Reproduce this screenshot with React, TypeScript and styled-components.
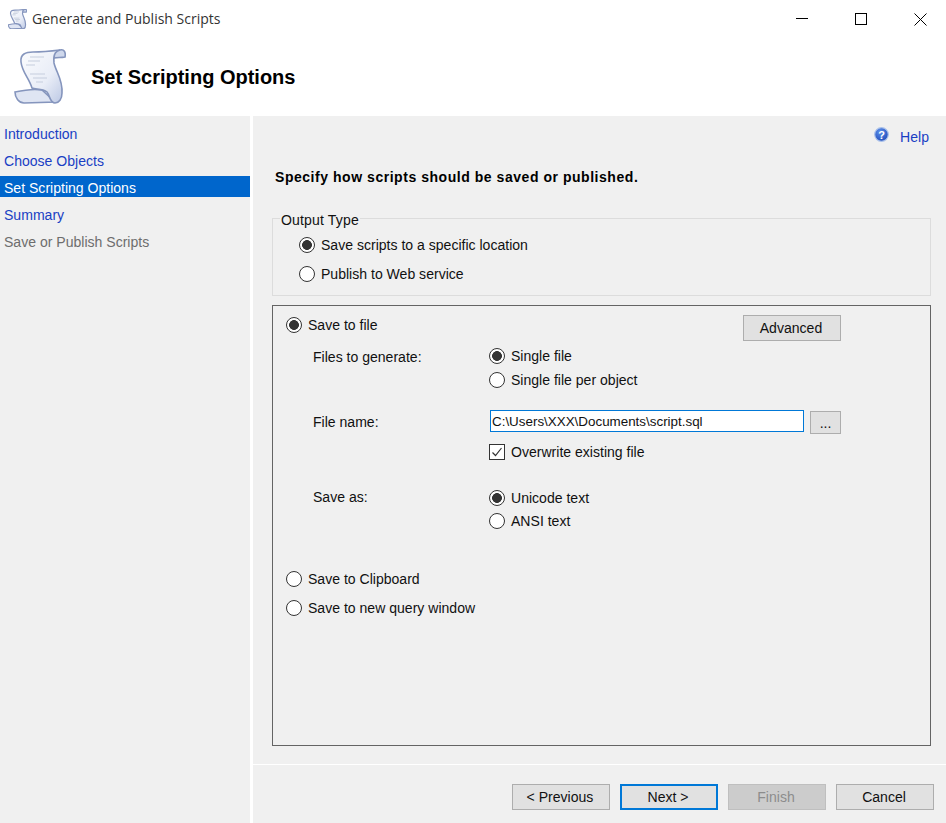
import React from 'react'
import styled, { createGlobalStyle } from 'styled-components'

const GlobalStyle = createGlobalStyle`
  html, body {
    margin: 0;
    padding: 0;
    background: #fff;
    overflow: hidden;
  }
  * {
    box-sizing: border-box;
  }
`;

const Window = styled.div`
  width: 946px;
  height: 823px;
  display: flex;
  flex-direction: column;
  background: #fff;
  font-family: "Liberation Sans", Arial, sans-serif;
  font-size: 14.05px;
  color: #111;
`;

const TitleBar = styled.div`
  height: 38px;
  display: flex;
  align-items: center;
  padding-left: 8px;
  flex-shrink: 0;
`;

const TitleText = styled.span`
  margin: -2px 0 0 5px;
  font-family: "Open Sans", sans-serif;
  font-size: 14px;
  color: #333;
`;

const WindowButtons = styled.div`
  margin-left: auto;
  display: flex;
  align-items: center;
  gap: 47px;
  padding-right: 19px;
`;

const Header = styled.div`
  height: 78px;
  display: flex;
  align-items: flex-start;
  padding: 11px 0 0 14px;
  flex-shrink: 0;
`;

const HeaderTitle = styled.h1`
  margin: 17px 0 0 25px;
  font-size: 20px;
  line-height: 22px;
  font-weight: bold;
  color: #000;
`;

const Body = styled.div`
  flex: 1;
  display: flex;
  gap: 3px;
  min-height: 0;
`;

const Sidebar = styled.nav`
  width: 250px;
  background: #f0f0f0;
  padding-top: 6px;
  display: flex;
  flex-direction: column;
  gap: 6px;
`;

const NavItem = styled.div<{ $active?: boolean; $disabled?: boolean }>`
  height: 21px;
  line-height: 25px;
  padding-left: 4px;
  background: ${p => (p.$active ? '#0066cc' : 'transparent')};
  color: ${p => (p.$active ? '#fff' : p.$disabled ? '#6d6d6d' : '#1a3fc4')};
`;

const Main = styled.main`
  flex: 1;
  background: #f0f0f0;
  display: flex;
  flex-direction: column;
`;

const HelpRow = styled.div`
  height: 44px;
  display: flex;
  justify-content: flex-end;
  align-items: flex-start;
  gap: 11px;
  padding: 11px 17px 0 0;
  color: #1a3fc4;
`;

const HelpLabel = styled.span`
  line-height: 20px;
`;

const Content = styled.div`
  padding: 0 15px 0 19px;
  flex: 1;
  display: flex;
  flex-direction: column;
`;

const Instruction = styled.p`
  margin: 9px 0 0 3px;
  height: 49px;
  font-size: 14px;
  letter-spacing: 0.54px;
  line-height: 16px;
  font-weight: bold;
  color: #000;
`;

const GroupBox = styled.div`
  position: relative;
  height: 78px;
  width: 659px;
  border: 1px solid #dcdcdc;
  padding: 16px 0 0 26px;
  display: flex;
  flex-direction: column;
  gap: 9px;
`;

const GroupLabel = styled.span`
  position: absolute;
  top: -7px;
  left: 7px;
  padding: 0 1px;
  line-height: 16px;
  letter-spacing: 0.15px;
  background: #f0f0f0;
`;

const Panel = styled.div`
  margin-top: 9px;
  width: 659px;
  height: 441px;
  border: 1px solid #646464;
  padding: 9px 0 0 13px;
  display: flex;
  flex-direction: column;
`;

const SaveRow = styled.div`
  display: flex;
  justify-content: space-between;
  align-items: flex-start;
  padding-right: 89px;
`;

const OptionGrid = styled.div`
  margin: 5px 0 0 27px;
  display: grid;
  grid-template-columns: 176px 352px;
`;

const FieldLabel = styled.span<{ $top?: number }>`
  margin-top: ${p => p.$top ?? 0}px;
  line-height: 20px;
`;

const OptionStack = styled.div<{ $gap: number; $top?: number }>`
  margin-top: ${p => p.$top ?? 0}px;
  display: flex;
  flex-direction: column;
  gap: ${p => p.$gap}px;
`;

const FileLine = styled.div`
  display: flex;
  align-items: flex-start;
  gap: 6px;
`;

const PathInput = styled.input`
  width: 314px;
  height: 22px;
  margin-left: 1px;
  border: 1px solid #0078d7;
  padding: 0 1px;
  outline: none;
  background: #fff;
  font-family: inherit;
  font-size: 13.4px;
  color: #111;
`;

const Option = styled.label`
  display: flex;
  align-items: center;
  gap: 6px;
  height: 20px;
  line-height: 20px;
`;

const Radio = styled.span<{ $on?: boolean }>`
  width: 16px;
  height: 16px;
  flex-shrink: 0;
  border: 1px solid #333;
  border-radius: 50%;
  background: ${p => (p.$on ? 'radial-gradient(circle, #333 0 4.6px, #fff 5.2px)' : '#fff')};
`;

const CheckBox = styled.span`
  width: 16px;
  height: 16px;
  flex-shrink: 0;
  border: 1px solid #333;
  background: #fff;
  display: flex;
  align-items: center;
  justify-content: center;
`;

const Button = styled.button<{ $focused?: boolean; $disabled?: boolean; $small?: boolean }>`
  width: ${p => (p.$small ? '31px' : '98px')};
  height: ${p => (p.$small ? '23px' : '26px')};
  margin-top: ${p => (p.$small ? '1px' : '0')};
  padding: 0 ${p => (p.$small ? '0' : '2px')} 0 0;
  font: inherit;
  color: ${p => (p.$disabled ? '#8c8c8c' : '#111')};
  background: ${p => (p.$disabled ? '#cccccc' : '#e1e1e1')};
  border: ${p => (p.$focused ? '2px solid #0078d7' : `1px solid ${p.$disabled ? '#bfbfbf' : '#adadad'}`)};
`;

const Footer = styled.div`
  height: 59px;
  border-top: 1px solid #fff;
  display: flex;
  justify-content: flex-end;
  gap: 10px;
  padding: 19px 12px 0 0;
`;

const BottomOptions = styled.div`
  margin-top: 38px;
  display: flex;
  flex-direction: column;
  gap: 9px;
`;

const ScrollIcon = ({ size, line = 1.6 }: { size: number; line?: number }) => (
  <svg width={size} height={size * 55 / 52} viewBox="14 49 52 55">
    <defs>
      <linearGradient id="scrollFill" x1="0" y1="0" x2="1" y2="1">
        <stop offset="0" stopColor="#fbfcfe" />
        <stop offset="0.6" stopColor="#e9edf7" />
        <stop offset="1" stopColor="#bcc8e4" />
      </linearGradient>
    </defs>
    <path d="M15 92 C24 90 36 89 42 90 L55 102 L24 103 C19 103 15 98 15 92Z" fill="#dfe5f3" stroke="#8595bd" strokeWidth={line} />
    <path d="M21 62 C20 54 26 52 33 52 C42 52 52 51 60 50 C55 53 53 57 54 63 C56 72 63 80 62 93 C62 99 59 103 55 103 C50 103 50 96 47 92 C42 88 35 90 32 88 C29 78 22 72 21 62Z" fill="url(#scrollFill)" stroke="#8595bd" strokeWidth={line} />
    <path d="M60 50 C64 49 66 52 65 57 C61 58 57 57 54 58 C54 54 56 51 60 50Z" fill="#cfd8ec" stroke="#8595bd" strokeWidth={line} />
    <path d="M30 57 H44 M28 61 H40 M26 65 H35 M30 74 H45 M33 78 H47 M36 82 H43" stroke="#c5cddd" strokeWidth={line * 0.75} fill="none" />
  </svg>
);

const HelpIcon = () => (
  <svg width="15" height="15" viewBox="0 0 15 15">
    <defs>
      <radialGradient id="helpFill" cx="0.4" cy="0.3" r="0.8">
        <stop offset="0" stopColor="#5b8ee8" />
        <stop offset="1" stopColor="#1c47b8" />
      </radialGradient>
    </defs>
    <circle cx="7.5" cy="7.5" r="6.8" fill="url(#helpFill)" stroke="#a9c0ea" strokeWidth="1.2" />
    <text x="7.5" y="11.5" textAnchor="middle" fontFamily="Liberation Sans" fontSize="11" fontWeight="bold" fill="#fff">?</text>
  </svg>
);

const MinimizeIcon = () => (
  <svg width="12" height="12" viewBox="0 0 12 12"><path d="M0 5.5 H12" stroke="#000" fill="none" /></svg>
);

const MaximizeIcon = () => (
  <svg width="12" height="12" viewBox="0 0 12 12"><rect x="0.5" y="0.5" width="11" height="11" stroke="#000" fill="none" /></svg>
);

const CloseIcon = () => (
  <svg width="13" height="13" viewBox="0 0 13 13"><path d="M0.5 0.5 L12.5 12.5 M12.5 0.5 L0.5 12.5" stroke="#000" fill="none" /></svg>
);

const CheckMark = () => (
  <svg width="12" height="12" viewBox="0 0 12 12"><path d="M1.5 6.5 L4.5 9.5 L10.5 2" stroke="#333" strokeWidth="1.2" fill="none" /></svg>
);

const navItems = ['Introduction', 'Choose Objects', 'Set Scripting Options', 'Summary', 'Save or Publish Scripts'];

const App = () => {
  return (
    <Window>
      <GlobalStyle />
      <TitleBar>
        <ScrollIcon size={19} line={3.2} />
        <TitleText>Generate and Publish Scripts</TitleText>
        <WindowButtons>
          <MinimizeIcon />
          <MaximizeIcon />
          <CloseIcon />
        </WindowButtons>
      </TitleBar>
      <Header>
        <ScrollIcon size={52} />
        <HeaderTitle>Set Scripting Options</HeaderTitle>
      </Header>
      <Body>
        <Sidebar>
          {navItems.map((item, i) => (
            <NavItem key={item} $active={i === 2} $disabled={i === 4}>{item}</NavItem>
          ))}
        </Sidebar>
        <Main>
          <HelpRow>
            <HelpIcon />
            <HelpLabel>Help</HelpLabel>
          </HelpRow>
          <Content>
            <Instruction>Specify how scripts should be saved or published.</Instruction>
            <GroupBox>
              <GroupLabel>Output Type</GroupLabel>
              <Option><Radio $on />Save scripts to a specific location</Option>
              <Option><Radio />Publish to Web service</Option>
            </GroupBox>
            <Panel>
              <SaveRow>
                <Option><Radio $on />Save to file</Option>
                <Button>Advanced</Button>
              </SaveRow>
              <OptionGrid>
                <FieldLabel $top={1}>Files to generate:</FieldLabel>
                <OptionStack $gap={4}>
                  <Option><Radio $on />Single file</Option>
                  <Option><Radio />Single file per object</Option>
                </OptionStack>
                <FieldLabel $top={22}>File name:</FieldLabel>
                <OptionStack $gap={8} $top={20}>
                  <FileLine>
                    <PathInput readOnly value="C:\Users\XXX\Documents\script.sql" />
                    <Button $small>...</Button>
                  </FileLine>
                  <Option><CheckBox><CheckMark /></CheckBox>Overwrite existing file</Option>
                </OptionStack>
                <FieldLabel $top={25}>Save as:</FieldLabel>
                <OptionStack $gap={3} $top={26}>
                  <Option><Radio $on />Unicode text</Option>
                  <Option><Radio />ANSI text</Option>
                </OptionStack>
              </OptionGrid>
              <BottomOptions>
                <Option><Radio />Save to Clipboard</Option>
                <Option><Radio />Save to new query window</Option>
              </BottomOptions>
            </Panel>
          </Content>
          <Footer>
            <Button>&lt; Previous</Button>
            <Button $focused>Next &gt;</Button>
            <Button $disabled>Finish</Button>
            <Button>Cancel</Button>
          </Footer>
        </Main>
      </Body>
    </Window>
  )
}

export default App
